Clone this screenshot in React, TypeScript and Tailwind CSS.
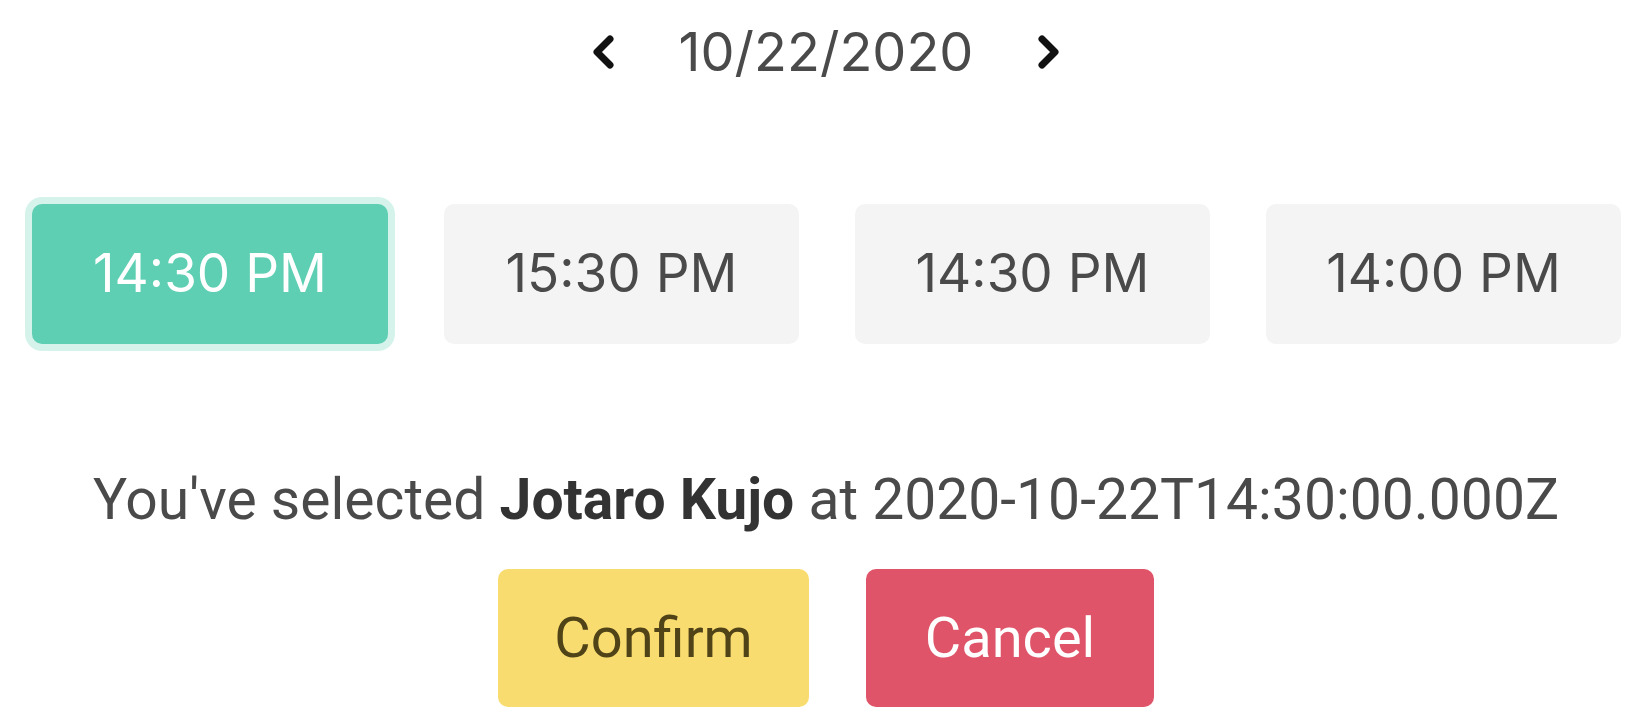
const slots = [
  { label: "14:30 PM", selected: true },
  { label: "15:30 PM", selected: false },
  { label: "14:30 PM", selected: false },
  { label: "14:00 PM", selected: false },
];

function Chevron({ dir }: { dir: "left" | "right" }) {
  return (
    <svg viewBox="0 0 23 36" className="w-[23px] h-[36px]">
      <polyline
        points={dir === "left" ? "18,5 5,18 18,31" : "5,5 18,18 5,31"}
        fill="none"
        stroke="#111111"
        strokeWidth="7"
        strokeLinecap="round"
        strokeLinejoin="round"
      />
    </svg>
  );
}

export default function App() {
  return (
    <div className="w-[1640px] h-[718px] bg-white overflow-hidden pl-[32px] pr-[20px] font-['Inter',sans-serif]">
      {/* DATE HEADER */}
      <div className="flex items-center justify-center gap-[64px] pt-[16px] h-[88px]">
        <button className="flex items-center">
          <Chevron dir="left" />
        </button>
        <span className="text-[54px] leading-[72px] text-[#4a4a4a]">10/22/2020</span>
        <button className="flex items-center">
          <Chevron dir="right" />
        </button>
      </div>

      {/* SLOTS */}
      <div className="flex gap-[56px] mt-[116px]">
        {slots.map((slot, i) => (
          <button
            key={i}
            className={
              slot.selected
                ? "w-[356px] h-[140px] shrink-0 rounded-[10px] bg-[#5ecfb3] text-white text-[53px] ring-[7px] ring-[#d6f3eb]"
                : "w-[355px] h-[140px] shrink-0 rounded-[10px] bg-[#f4f4f4] text-[#4a4a4a] text-[53px]"
            }
          >
            {slot.label}
          </button>
        ))}
      </div>

      {/* SUMMARY */}
      <p className="mt-[122px] text-center text-[57px] leading-[68px] text-[#4a4a4a] font-['Roboto',sans-serif]">
        You've selected <b className="font-bold text-[#333333]">Jotaro Kujo</b> at 2020-10-22T14:30:00.000Z
      </p>

      {/* ACTIONS */}
      <div className="flex justify-center gap-[57px] mt-[35px] font-['Roboto',sans-serif]">
        <button className="w-[311px] h-[138px] rounded-[10px] bg-[#f9dc6f] text-[#4f4317] text-[56px]">
          Confirm
        </button>
        <button className="w-[288px] h-[138px] rounded-[10px] bg-[#df5469] text-white text-[56px]">
          Cancel
        </button>
      </div>
    </div>
  );
}
